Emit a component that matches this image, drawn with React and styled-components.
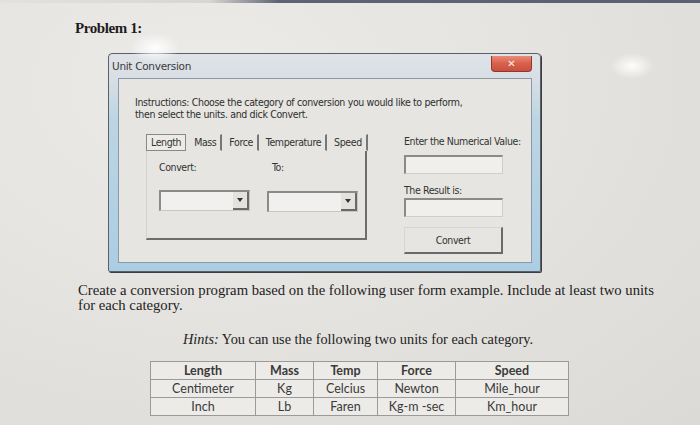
import React from "react";
import styled, { createGlobalStyle } from "styled-components";

const GlobalStyle = createGlobalStyle`
  html, body {
    margin: 0;
    padding: 0;
  }
  body {
    width: 700px;
    height: 425px;
    overflow: hidden;
    background: radial-gradient(ellipse at 30% 20%, #ecebe8 0%, #e4e2de 55%, #dcdad6 100%);
    font-family: "Liberation Serif", serif;
  }
`;

const TopStrip = styled.div`
  height: 3px;
  background: linear-gradient(90deg, #e4e2de 0%, #d8d6d3 30%, #5d6274 40%, #5b6072 100%);
`;

const Page = styled.main`
  display: flex;
  flex-direction: column;
  align-items: flex-start;
  padding: 16px 0 0 75px;
  position: relative;
`;

const Glare = styled.div`
  position: absolute;
  left: ${(p) => p.x}px;
  top: ${(p) => p.y}px;
  width: ${(p) => p.size}px;
  height: ${(p) => p.size * 0.6}px;
  border-radius: 50%;
  background: radial-gradient(ellipse, rgba(255, 255, 255, 0.95) 0%, rgba(255, 255, 255, 0) 70%);
  pointer-events: none;
`;

const Heading = styled.h1`
  margin: 0;
  font-family: "Liberation Serif", serif;
  font-weight: 700;
  font-size: 15px;
  letter-spacing: -0.4px;
  line-height: 18px;
  color: #1e1c1c;
`;

const Window = styled.section`
  margin: 16px 0 0 33px;
  width: 433px;
  height: 219px;
  box-sizing: border-box;
  display: flex;
  flex-direction: column;
  border: 1px solid #5a6068;
  border-radius: 4px 4px 2px 2px;
  background: linear-gradient(180deg, #dfe3e7 0%, #d8dee4 12%, #bcd5e4 30%, #abcde2 100%);
  box-shadow: 1px 1px 0 #3a3e44;
  padding: 0 8px 8px 0;
`;

const TitleBar = styled.div`
  height: 24px;
  display: flex;
  align-items: center;
  justify-content: space-between;
  padding: 0 0 0 3px;
`;

const Title = styled.span`
  font-family: "DejaVu Sans", sans-serif;
  font-size: 10.5px;
  color: #3a3a3a;
  letter-spacing: -0.3px;
`;

const CloseButton = styled.div`
  width: 39px;
  height: 15px;
  margin-top: -5px;
  border-radius: 0 0 4px 4px;
  border: 1px solid #8c3a30;
  border-top: none;
  background: linear-gradient(180deg, #e98b78 0%, #d9604c 50%, #c9503e 100%);
  display: flex;
  align-items: center;
  justify-content: center;
  color: #fff3f0;
  font-family: "DejaVu Sans", sans-serif;
  font-weight: 700;
  font-size: 10px;
`;

const Client = styled.div`
  flex: 1;
  margin-left: 9px;
  border: 1px solid #8c9aa6;
  background: #e6e5e1;
  padding: 17px 0 0 16px;
  display: flex;
  flex-direction: column;
`;

const Instructions = styled.p`
  margin: 0;
  font-family: "DejaVu Sans Condensed", "DejaVu Sans", sans-serif;
  font-size: 10.5px;
  line-height: 12px;
  color: #2e2e2e;
  letter-spacing: -0.35px;
`;

const FormRow = styled.div`
  display: flex;
  margin-top: 14px;
  padding-left: 11px;
`;

const TabBlock = styled.div`
  width: 221px;
  display: flex;
  flex-direction: column;
`;

const Tabs = styled.div`
  display: flex;
  align-items: center;
  height: 17px;
  white-space: nowrap;
`;

const Tab = styled.div`
  font-family: "DejaVu Sans Condensed", "DejaVu Sans", sans-serif;
  font-size: 10.5px;
  letter-spacing: -0.4px;
  color: #333;
  padding: 1px 4px;
  line-height: 13px;
  border: ${(p) => (p.active ? "1px solid #888" : "1px solid transparent")};
  border-right: ${(p) => (p.active ? "1px solid #888" : "2px solid #777")};
  background: ${(p) => (p.active ? "#ecebe8" : "transparent")};
  margin-right: ${(p) => (p.active ? "3px" : "2px")};
`;

const Panel = styled.div`
  height: 89px;
  box-sizing: border-box;
  border-left: 1px solid #d4d2ce;
  border-right: 2px solid #6d6d6d;
  border-bottom: 2px solid #6d6d6d;
  display: flex;
  gap: 10px;
  padding: 10px 0 0 12px;
`;

const Field = styled.div`
  display: flex;
  flex-direction: column;
  width: ${(p) => p.w}px;
`;

const Label = styled.span`
  font-family: "DejaVu Sans Condensed", "DejaVu Sans", sans-serif;
  font-size: 10.5px;
  letter-spacing: -0.4px;
  white-space: nowrap;
  color: #333;
  line-height: 12px;
  height: ${(p) => p.h || 12}px;
  padding-left: ${(p) => p.indent || 0}px;
`;

const Combo = styled.div`
  height: 21px;
  width: 91px;
  box-sizing: border-box;
  border-top: 2px solid #8a8a8a;
  border-left: 2px solid #8a8a8a;
  border-right: 1px solid #c8c6c2;
  border-bottom: 1px solid #c8c6c2;
  background: #f1f0ee;
  display: flex;
  justify-content: flex-end;
`;

const ComboArrow = styled.div`
  width: 14px;
  background: #e3e2de;
  border-right: 2px solid #6a6a6a;
  border-bottom: 2px solid #6a6a6a;
  display: flex;
  align-items: center;
  justify-content: center;
  &::after {
    content: "";
    border-left: 3px solid transparent;
    border-right: 3px solid transparent;
    border-top: 4px solid #333;
  }
`;

const RightColumn = styled.div`
  margin-left: 37px;
  width: 99px;
  display: flex;
  flex-direction: column;
  padding-top: 1px;
`;

const TextBox = styled.div`
  height: ${(p) => p.h}px;
  box-sizing: border-box;
  border-top: 2px solid #8a8a8a;
  border-left: 2px solid #8a8a8a;
  border-right: 1px solid #d0cecb;
  border-bottom: 1px solid #d0cecb;
  background: #f0efec;
  margin-bottom: ${(p) => p.mb}px;
`;

const Button = styled.div`
  height: 27px;
  box-sizing: border-box;
  border-top: 1px solid #d8d6d2;
  border-left: 1px solid #d8d6d2;
  border-right: 2px solid #6a6a6a;
  border-bottom: 2px solid #6a6a6a;
  background: #e6e5e1;
  display: flex;
  align-items: center;
  justify-content: center;
  font-family: "DejaVu Sans Condensed", "DejaVu Sans", sans-serif;
  font-size: 10.5px;
  letter-spacing: -0.4px;
  color: #333;
`;

const Paragraph = styled.p`
  margin: 11px 0 0 3px;
  font-family: "Liberation Serif", serif;
  font-size: 14.7px;
  line-height: 15px;
  color: #222;
`;

const Hint = styled.p`
  margin: 18px 0 0 108px;
  font-family: "Liberation Serif", serif;
  font-size: 14.3px;
  line-height: 16px;
  color: #222;
  & > em {
    font-style: italic;
  }
`;

const Table = styled.table`
  margin: 14px 0 0 75px;
  width: 418px;
  table-layout: fixed;
  border-collapse: collapse;
  background: #ecebe8;
  font-family: "Lato", "Open Sans", sans-serif;
  font-size: 12.5px;
  color: #3a3a3a;
  & td, & th {
    border: 1px solid #9a9a9a;
    text-align: center;
    padding: 0;
    height: 17px;
    line-height: 17px;
  }
  & th {
    font-weight: 700;
  }
`;

const cols = [
  { w: 105, head: "Length", a: "Centimeter", b: "Inch" },
  { w: 58, head: "Mass", a: "Kg", b: "Lb" },
  { w: 64, head: "Temp", a: "Celcius", b: "Faren" },
  { w: 78, head: "Force", a: "Newton", b: "Kg-m -sec" },
  { w: 113, head: "Speed", a: "Mile_hour", b: "Km_hour" },
];

export default function App() {
  return (
    <>
      <GlobalStyle />
      <TopStrip />
      <Page>
        <Glare x={130} y={30} size={50} />
        <Glare x={610} y={50} size={44} />
        <Heading>Problem 1:</Heading>
        <Window>
          <TitleBar>
            <Title>Unit Conversion</Title>
            <CloseButton>✕</CloseButton>
          </TitleBar>
          <Client>
            <Instructions>
              Instructions: Choose the category of conversion you would like to perform,
              <br />
              then select the units. and dick Convert.
            </Instructions>
            <FormRow>
              <TabBlock>
                <Tabs>
                  <Tab active>Length</Tab>
                  <Tab>Mass</Tab>
                  <Tab>Force</Tab>
                  <Tab>Temperature</Tab>
                  <Tab>Speed</Tab>
                </Tabs>
                <Panel>
                  <Field w={98}>
                    <Label h={29}>Convert:</Label>
                    <Combo>
                      <ComboArrow />
                    </Combo>
                  </Field>
                  <Field w={91}>
                    <Label h={30} indent={5}>To:</Label>
                    <Combo>
                      <ComboArrow />
                    </Combo>
                  </Field>
                </Panel>
              </TabBlock>
              <RightColumn>
                <Label h={20}>Enter the Numerical Value:</Label>
                <TextBox h={19} mb={10} />
                <Label h={14}>The Result is:</Label>
                <TextBox h={19} mb={10} />
                <Button>Convert</Button>
              </RightColumn>
            </FormRow>
          </Client>
        </Window>
        <Paragraph>
          Create a conversion program based on the following user form example. Include at least two units
          <br />
          for each category.
        </Paragraph>
        <Hint>
          <em>Hints:</em> You can use the following two units for each category.
        </Hint>
        <Table>
          <colgroup>
            {cols.map((c) => (
              <col key={c.head} style={{ width: c.w }} />
            ))}
          </colgroup>
          <thead>
            <tr>
              {cols.map((c) => (
                <th key={c.head}>{c.head}</th>
              ))}
            </tr>
          </thead>
          <tbody>
            <tr>
              {cols.map((c) => (
                <td key={c.head}>{c.a}</td>
              ))}
            </tr>
            <tr>
              {cols.map((c) => (
                <td key={c.head}>{c.b}</td>
              ))}
            </tr>
          </tbody>
        </Table>
      </Page>
    </>
  );
}
